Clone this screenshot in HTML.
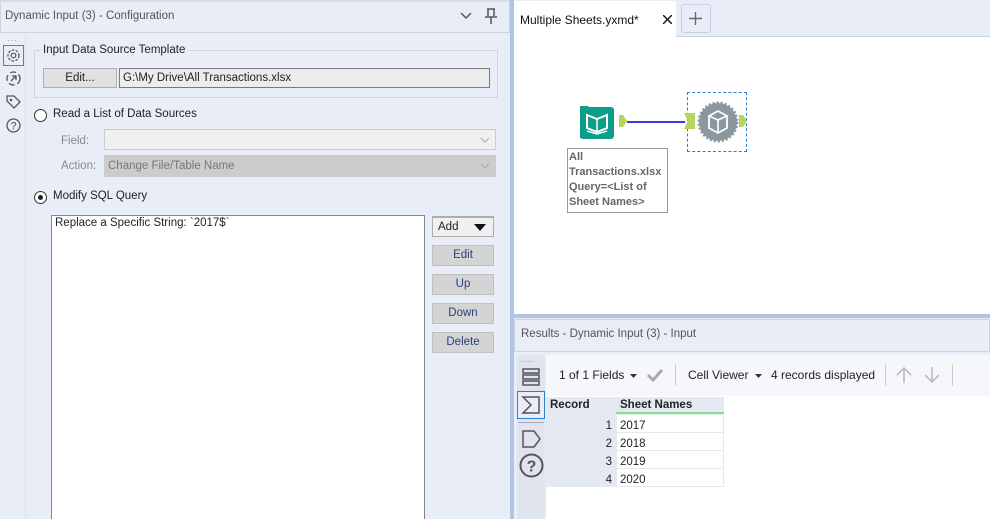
<!DOCTYPE html>
<html><head><style>
*{box-sizing:border-box;margin:0;padding:0}
html,body{width:990px;height:519px;overflow:hidden}
body{background:#e9edf7;font-family:"Liberation Sans",sans-serif;font-size:11.5px;color:#222;position:relative}
.a{position:absolute}
.btn{position:absolute;background:#d4d4d4;border:1px solid #c0c0c0;color:#2b3f7c;text-align:center;font-size:11.5px;line-height:18px}
.gray{color:#888}
</style></head><body>
<div class="a" style="left:0;top:0;width:510px;height:33px;border:1px solid #cfd3dc;border-top:2px solid #d8dbe3;background:#e9edf7"></div>
<div class="a" style="left:5px;top:10px;color:#555;font-size:11.5px">Dynamic Input (3) - Configuration</div>
<svg class="a" style="left:460px;top:12px" width="12" height="8"><path d="M1 1l5 5 5-5" fill="none" stroke="#555" stroke-width="1.5"/></svg>
<svg class="a" style="left:484px;top:8px" width="14" height="17"><path d="M3 1h8M4 1v7M10 1v7M1 9h12M7 9v7" fill="none" stroke="#555" stroke-width="1.5"/></svg>
<div class="a" style="left:0;top:33px;width:26px;height:486px;background:#e9edf7;border-right:1px solid #dde1ea"></div>
<div class="a" style="left:7px;top:33px;color:#999;font-size:9px;letter-spacing:1px">...</div>
<div class="a" style="left:3px;top:45px;width:21px;height:21px;border:1px solid #3b86d8"></div>
<svg class="a" style="left:5px;top:47px" width="17" height="17"><circle cx="8.5" cy="8.5" r="5.5" fill="none" stroke="#555" stroke-width="1.3" stroke-dasharray="2.5 1.5"/><circle cx="8.5" cy="8.5" r="2.3" fill="none" stroke="#555" stroke-width="1.2"/></svg>
<svg class="a" style="left:5px;top:70px" width="17" height="17"><circle cx="8.5" cy="8.5" r="6.5" fill="none" stroke="#555" stroke-width="1.3" stroke-dasharray="6 3"/><path d="M6 11l5-5M7 6h4v4" fill="none" stroke="#555" stroke-width="1.3"/></svg>
<svg class="a" style="left:5px;top:94px" width="17" height="17"><path d="M2 2h7l6 6-6 6-7-7z" fill="none" stroke="#555" stroke-width="1.3"/><circle cx="6" cy="6" r="1.3" fill="#555"/></svg>
<svg class="a" style="left:5px;top:117px" width="17" height="17"><circle cx="8.5" cy="8.5" r="6.5" fill="none" stroke="#555" stroke-width="1.3"/><text x="8.5" y="12.5" font-size="11" text-anchor="middle" fill="#555" font-family="Liberation Sans">?</text></svg>
<div class="a" style="left:34px;top:50px;width:464px;height:48px;border:1px solid #d0d4dc"></div>
<div class="a" style="left:40px;top:44px;background:#e9edf7;padding:0 3px">Input Data Source Template</div>
<div class="a" style="left:43px;top:68px;width:74px;height:20px;background:#e1e1e1;border:1px solid #adadad;text-align:center;line-height:18px">Edit...</div>
<div class="a" style="left:119px;top:68px;width:371px;height:20px;background:#ececec;border:1px solid #7a7a7a;padding-left:3px;line-height:18px">G:\My Drive\All Transactions.xlsx</div>
<div class="a" style="left:34px;top:109px;width:13px;height:13px;border:1px solid #333;border-radius:50%;background:#fff"></div>
<div class="a" style="left:53px;top:108px">Read a List of Data Sources</div>
<div class="a gray" style="left:61px;top:135px">Field:</div>
<div class="a" style="left:104px;top:129px;width:392px;height:21px;border:1px solid #ccc;background:#f0f0f0"></div>
<svg class="a" style="left:480px;top:137px" width="10" height="6"><path d="M1 1l4 4 4-4" fill="none" stroke="#aaa"/></svg>
<div class="a gray" style="left:61px;top:160px">Action:</div>
<div class="a" style="left:104px;top:155px;width:392px;height:22px;border:1px solid #ccc;background:#cccccc;color:#777;padding-left:3px;line-height:20px">Change File/Table Name</div>
<svg class="a" style="left:480px;top:163px" width="10" height="6"><path d="M1 1l4 4 4-4" fill="none" stroke="#aaa"/></svg>
<div class="a" style="left:34px;top:191px;width:13px;height:13px;border:1px solid #333;border-radius:50%;background:#fff"></div>
<div class="a" style="left:38px;top:195px;width:5px;height:5px;border-radius:50%;background:#222"></div>
<div class="a" style="left:53px;top:190px">Modify SQL Query</div>
<div class="a" style="left:51px;top:215px;width:374px;height:320px;border:1px solid #828790;background:#fff"></div>
<div class="a" style="left:55px;top:217px">Replace a Specific String: `2017$`</div>
<div class="a" style="left:432px;top:216px;width:62px;height:21px;border:1px solid #adadad;border-width:2px 1px 1px 1px;background:#f0f0f0;line-height:18px;padding-left:5px">Add</div>
<svg class="a" style="left:474px;top:224px" width="12" height="7"><path d="M0 0h12L6 7z" fill="#111"/></svg>
<div class="btn" style="left:432px;top:245px;width:62px;height:21px">Edit</div>
<div class="btn" style="left:432px;top:274px;width:62px;height:21px">Up</div>
<div class="btn" style="left:432px;top:303px;width:62px;height:21px">Down</div>
<div class="btn" style="left:432px;top:332px;width:62px;height:21px">Delete</div>
<div class="a" style="left:510px;top:0;width:4px;height:519px;background:#b3c3e3"></div>
<div class="a" style="left:514px;top:0;width:476px;height:315px;background:#fff"></div>
<div class="a" style="left:514px;top:0;width:476px;height:37px;background:#e9edf7;border-bottom:1px solid #c8d0e4"></div>
<div class="a" style="left:514px;top:1px;width:162px;height:37px;background:#fff"></div>
<div class="a" style="left:520px;top:13px;font-size:12px;color:#111">Multiple Sheets.yxmd*</div>
<svg class="a" style="left:663px;top:15px" width="9" height="9"><path d="M0 0l9 9M9 0L0 9" stroke="#111" stroke-width="1.4"/></svg>
<div class="a" style="left:681px;top:4px;width:30px;height:29px;border:1px solid #c8d0e4;border-radius:3px;background:#e9edf7"></div>
<svg class="a" style="left:688px;top:11px" width="15" height="15"><path d="M7.5 1v13M1 7.5h13" stroke="#666" stroke-width="1.4"/></svg>
<svg class="a" style="left:578px;top:102px" width="40" height="38"><path d="M2 4h8l2 2h23v30H2z" fill="#0d9e8a"/><rect x="2" y="5" width="34" height="32" rx="3" fill="#0d9e8a"/><path d="M9 13l10 4 10-4v13l-10 4-10-4z" fill="none" stroke="#fff" stroke-width="2"/><path d="M19 17v13M9 29l10 3 10-3" fill="none" stroke="#fff" stroke-width="1.5"/></svg>
<svg class="a" style="left:619px;top:115px" width="8" height="12"><path d="M0 0h4l4 6-4 6H0z" fill="#b7d55c"/></svg>
<div class="a" style="left:627px;top:121px;width:58px;height:2px;background:#3d3ddb"></div>
<div class="a" style="left:687px;top:92px;width:60px;height:60px;border:1px dashed #2d7fd1"></div>
<svg class="a" style="left:684px;top:113px" width="12" height="16"><path d="M0 0h11v16H0l4-8z" fill="#b7d55c"/></svg>
<svg class="a" style="left:697px;top:101px" width="42" height="42"><circle cx="21" cy="21" r="19" fill="#8a979e" stroke="#8a979e" stroke-width="3" stroke-dasharray="2 2"/><path d="M12 15l9-5 9 5v12l-9 5-9-5z" fill="none" stroke="#fff" stroke-width="1.8"/><path d="M12 15l9 4 9-4M21 19v13" fill="none" stroke="#fff" stroke-width="1.6"/></svg>
<svg class="a" style="left:739px;top:115px" width="8" height="12"><path d="M0 0h4l4 6-4 6H0z" fill="#b7d55c"/></svg>
<div class="a" style="left:567px;top:148px;width:101px;height:65px;border:1px solid #999;background:#fff;color:#666;font-weight:bold;font-size:11px;line-height:15px;padding:1px 0 0 1px">All<br>Transactions.xlsx<br>Query=&lt;List of<br>Sheet Names&gt;</div>
<div class="a" style="left:514px;top:314px;width:476px;height:4px;background:#b3c3e3"></div>
<div class="a" style="left:514px;top:318px;width:476px;height:201px;background:#e9edf7"></div>
<div class="a" style="left:514px;top:319px;width:476px;height:33px;border:1px solid #cfd3dc"></div>
<div class="a" style="left:521px;top:328px;color:#555">Results - Dynamic Input (3) - Input</div>
<div class="a" style="left:546px;top:355px;width:444px;height:164px;background:#fff"></div>
<div class="a" style="left:546px;top:355px;width:444px;height:41px;background:#f5f7fb"></div>
<div class="a" style="left:517px;top:355px;width:28px;height:164px;background:#dfe4ef;border-radius:3px 3px 0 0"></div>
<div class="a" style="left:521px;top:355px;color:#999;font-size:8px">......</div>
<svg class="a" style="left:522px;top:368px" width="18" height="18"><rect x="1" y="1" width="16" height="4" fill="none" stroke="#555" stroke-width="1.5"/><rect x="1" y="7" width="16" height="4" fill="none" stroke="#555" stroke-width="1.5"/><rect x="1" y="13" width="16" height="4" fill="none" stroke="#555" stroke-width="1.5"/></svg>
<div class="a" style="left:517px;top:391px;width:28px;height:28px;border:1px solid #2d7fd1;background:#e9edf7"></div>
<svg class="a" style="left:521px;top:395px" width="20" height="20"><path d="M2 2h16v16H2l8-8z" fill="none" stroke="#555" stroke-width="1.5"/></svg>
<div class="a" style="left:518px;top:422px;width:26px;height:1px;background:#aab"></div>
<svg class="a" style="left:522px;top:430px" width="20" height="18"><path d="M1 1h11l6 8-6 8H1z" fill="none" stroke="#555" stroke-width="1.5"/></svg>
<svg class="a" style="left:519px;top:453px" width="25" height="25"><circle cx="12.5" cy="12.5" r="11" fill="none" stroke="#555" stroke-width="2"/><text x="12.5" y="18.5" font-size="16" font-weight="bold" text-anchor="middle" fill="#555" font-family="Liberation Sans">?</text></svg>
<div class="a" style="left:559px;top:368px;font-size:12px;color:#222">1 of 1 Fields</div>
<svg class="a" style="left:630px;top:374px" width="7" height="4"><path d="M0 0h7L3.5 4z" fill="#333"/></svg>
<svg class="a" style="left:646px;top:367px" width="18" height="16"><path d="M2 8l5 5 9-10" fill="none" stroke="#aaa" stroke-width="3"/></svg>
<div class="a" style="left:675px;top:364px;width:1px;height:22px;background:#ccc"></div>
<div class="a" style="left:688px;top:368px;font-size:12px">Cell Viewer</div>
<svg class="a" style="left:755px;top:374px" width="7" height="4"><path d="M0 0h7L3.5 4z" fill="#333"/></svg>
<div class="a" style="left:771px;top:368px;font-size:12px">4 records displayed</div>
<div class="a" style="left:885px;top:364px;width:1px;height:22px;background:#ccc"></div>
<svg class="a" style="left:896px;top:366px" width="16" height="18"><path d="M8 17V2M1 9l7-7 7 7" fill="none" stroke="#bbb" stroke-width="1.6"/></svg>
<svg class="a" style="left:924px;top:366px" width="16" height="18"><path d="M8 1v15M1 9l7 7 7-7" fill="none" stroke="#bbb" stroke-width="1.6"/></svg>
<div class="a" style="left:952px;top:364px;width:1px;height:22px;background:#ccc"></div>
<div class="a" style="left:546px;top:397px;width:178px;height:90px;background:#e4e8f2"></div>
<div class="a" style="left:550px;top:399px;font-weight:bold;font-size:11.5px">Record</div>
<div class="a" style="left:616px;top:397px;width:108px;height:17px;border-bottom:2px solid #8be08a"></div>
<div class="a" style="left:620px;top:399px;font-weight:bold;font-size:11.5px">Sheet Names</div>
<div class="a" style="left:617px;top:415px;width:106px;height:17px;background:#fff"></div>
<div class="a" style="left:617px;top:433px;width:106px;height:17px;background:#fff"></div>
<div class="a" style="left:617px;top:451px;width:106px;height:17px;background:#fff"></div>
<div class="a" style="left:617px;top:469px;width:106px;height:17px;background:#fff"></div>
<div class="a" style="left:600px;top:417px;line-height:18px;text-align:right;width:12px">1<br>2<br>3<br>4</div>
<div class="a" style="left:620px;top:417px;line-height:18px">2017<br>2018<br>2019<br>2020</div>
</body></html>
